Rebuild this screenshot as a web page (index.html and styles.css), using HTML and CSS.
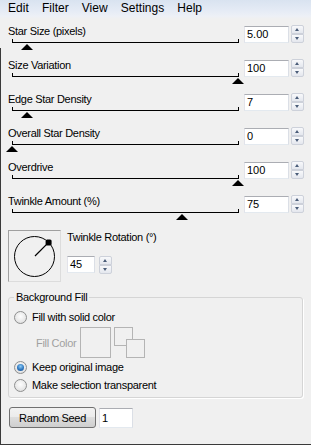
FILE: index.html
```html
<!DOCTYPE html>
<html>
<head>
<meta charset="utf-8">
<link rel="stylesheet" href="styles.css">
</head>
<body>
<div class="window">
  <nav class="menubar">
    <span class="menu-item">Edit</span>
    <span class="menu-item">Filter</span>
    <span class="menu-item">View</span>
    <span class="menu-item">Settings</span>
    <span class="menu-item">Help</span>
  </nav>
  <main class="panel">
    <div class="slider-row">
      <div class="slider-col">
        <div class="label">Star Size (pixels)</div>
        <div class="track"><span class="thumb" style="left:8px"></span></div>
      </div>
      <div class="value-box">5.00</div>
      <div class="spin"><span class="spin-btn up"></span><span class="spin-btn down"></span></div>
    </div>
    <div class="slider-row">
      <div class="slider-col">
        <div class="label">Size Variation</div>
        <div class="track"><span class="thumb" style="left:219px"></span></div>
      </div>
      <div class="value-box">100</div>
      <div class="spin"><span class="spin-btn up"></span><span class="spin-btn down"></span></div>
    </div>
    <div class="slider-row">
      <div class="slider-col">
        <div class="label">Edge Star Density</div>
        <div class="track"><span class="thumb" style="left:8px"></span></div>
      </div>
      <div class="value-box">7</div>
      <div class="spin"><span class="spin-btn up"></span><span class="spin-btn down"></span></div>
    </div>
    <div class="slider-row">
      <div class="slider-col">
        <div class="label">Overall Star Density</div>
        <div class="track"><span class="thumb" style="left:-7px"></span></div>
      </div>
      <div class="value-box">0</div>
      <div class="spin"><span class="spin-btn up"></span><span class="spin-btn down"></span></div>
    </div>
    <div class="slider-row">
      <div class="slider-col">
        <div class="label">Overdrive</div>
        <div class="track"><span class="thumb" style="left:219px"></span></div>
      </div>
      <div class="value-box">100</div>
      <div class="spin"><span class="spin-btn up"></span><span class="spin-btn down"></span></div>
    </div>
    <div class="slider-row">
      <div class="slider-col">
        <div class="label">Twinkle Amount (%)</div>
        <div class="track"><span class="thumb" style="left:163px"></span></div>
      </div>
      <div class="value-box">75</div>
      <div class="spin"><span class="spin-btn up"></span><span class="spin-btn down"></span></div>
    </div>

    <div class="dial-row">
      <div class="dial">
        <svg width="51" height="50" viewBox="0 0 51 50">
          <circle cx="25.5" cy="25.5" r="20" fill="none" stroke="#000" stroke-width="1"/>
          <line x1="26" y1="25" x2="39.6" y2="11.4" stroke="#000" stroke-width="1.2"/>
          <rect x="36.6" y="8.4" width="6" height="6" rx="1.5" fill="#000"/>
        </svg>
      </div>
      <div class="dial-side">
        <div class="label">Twinkle Rotation (°)</div>
        <div class="rot-input">
          <div class="value-box small">45</div>
          <div class="spin"><span class="spin-btn up"></span><span class="spin-btn down"></span></div>
        </div>
      </div>
    </div>

    <fieldset class="group">
      <legend>Background Fill</legend>
      <div class="radio-row"><span class="radio"></span><span>Fill with solid color</span></div>
      <div class="fill-row">
        <span class="fill-label">Fill Color</span>
        <span class="swatch"></span>
        <span class="swatch-pair"><span class="sq sq-a"></span><span class="sq sq-b"></span></span>
      </div>
      <div class="radio-row"><span class="radio checked"></span><span>Keep original image</span></div>
      <div class="radio-row"><span class="radio"></span><span>Make selection transparent</span></div>
    </fieldset>

    <div class="seed-row">
      <button class="btn" type="button">Random Seed</button>
      <div class="value-box seed-input">1</div>
    </div>
  </main>
</div>
</body>
</html>
```

FILE: styles.css
```css
* { box-sizing: border-box; }
html, body { margin: 0; padding: 0; }
body {
  background: #f0f0f0;
  font-family: "Liberation Sans", Arial, sans-serif;
  font-size: 11px;
  color: #000;
}
.window {
  position: relative;
  width: 311px;
  height: 445px;
  border-bottom: 1px solid #3a3a3a;
  overflow: hidden;
}
.window::before {
  content: "";
  position: absolute;
  left: 0;
  top: 48px;
  bottom: 0;
  width: 1px;
  background: #3a3a3a;
}
.menubar {
  display: flex;
  height: 19px;
  padding-left: 1.5px;
  background: linear-gradient(#d9e3f0 0%, #e5ebf5 55%, #edf0f6 85%, #f0f0f0 100%);
  font-size: 12px;
  line-height: 17px;
}
.menu-item { padding: 0 6.6px; }
.panel { padding: 6px 0 0 8px; }

.slider-row { display: flex; height: 34px; }
.slider-col { width: 236px; }
.label { line-height: 13px; letter-spacing: -0.3px; white-space: nowrap; }
.track {
  position: relative;
  margin: 1px 0 0 4px;
  width: 227px;
  height: 4px;
  border: 1px solid #000;
  border-top: 0;
}
.thumb {
  position: absolute;
  top: calc(100% + 2px);
  width: 0;
  height: 0;
  border-left: 6px solid transparent;
  border-right: 6px solid transparent;
  border-bottom: 6px solid #000;
}
.value-box {
  margin-top: 1px;
  width: 45px;
  height: 17px;
  background: #fff;
  border: 1px solid;
  border-color: #abadb3 #dbdfe6 #e3e9ef #e2e3ea;
  padding-left: 2px;
  line-height: 15px;
}
.spin {
  margin-left: 2px;
  width: 13px;
  height: 18px;
  display: flex;
  flex-direction: column;
  gap: 0;
}
.spin-btn {
  position: relative;
  height: 9px;
  border: 1px solid #cdd1da;
  background: linear-gradient(#f8f9fb, #e4e7ee);
}
.spin-btn.up { border-radius: 2px 2px 0 0; }
.spin-btn.down { border-radius: 0 0 2px 2px; }
.spin-btn::after {
  content: "";
  position: absolute;
  left: 3px;
  top: 2px;
  width: 0;
  height: 0;
  border-left: 2.5px solid transparent;
  border-right: 2.5px solid transparent;
}
.spin-btn.up::after { border-bottom: 3px solid #4b5d79; }
.spin-btn.down::after { border-top: 3px solid #4b5d79; }

.dial-row { display: flex; margin-top: 1px; }
.dial {
  width: 53px;
  height: 52px;
  border: 1px solid;
  border-color: #a0a0a0 #dcdcdc #dcdcdc #a0a0a0;
}
.dial svg { display: block; }
.dial-side { margin-left: 6px; padding-top: 1px; }
.rot-input { display: flex; margin-top: 12px; }
.value-box.small { width: 28px; margin-top: 0; }
.rot-input .spin { margin-left: 4px; }

.group {
  margin: 9px 0 0 0;
  width: 295px;
  min-width: 0;
  padding: 4px 0 3px 5px;
  border: 1px solid #d5d5d5;
  border-radius: 3px;
  box-shadow: 1px 1px 0 #fff;
}
.group legend {
  padding: 0 2px;
  line-height: 13px;
  letter-spacing: -0.3px;
}
.radio-row {
  display: flex;
  align-items: center;
  height: 18px;
  gap: 5px;
  letter-spacing: -0.3px;
}
.radio {
  position: relative;
  flex: none;
  width: 13px;
  height: 13px;
  border-radius: 50%;
  border: 1px solid #8e8f8f;
  background: radial-gradient(circle at 50% 40%, #fdfdfd 0%, #e8e8e8 60%, #d2d2d2 100%);
}
.radio.checked::after {
  content: "";
  position: absolute;
  left: 2px;
  top: 2px;
  width: 7px;
  height: 7px;
  border-radius: 50%;
  background: radial-gradient(circle at 50% 35%, #8ecbf5 0%, #2f78c0 55%, #1c4f8c 100%);
}
.fill-row {
  display: flex;
  align-items: center;
  height: 31px;
  margin-top: 1px;
  padding-left: 22px;
}
.fill-label { color: #a0a0a0; letter-spacing: -0.3px; width: 44px; }
.swatch { width: 31px; height: 31px; border: 1px solid #b4b4b4; }
.swatch-pair { position: relative; width: 31px; height: 31px; margin-left: 3px; }
.sq {
  position: absolute;
  width: 19px;
  height: 19px;
  border: 1px solid #b4b4b4;
  background: #f0f0f0;
}
.sq-a { left: 0; top: 0; }
.sq-b { left: 12px; top: 12px; }

.seed-row { display: flex; margin-top: 9px; padding-left: 1px; }
.btn {
  width: 87px;
  height: 21px;
  padding: 0;
  border: 1px solid #707070;
  border-radius: 3px;
  background: linear-gradient(#f2f2f2 0%, #ebebeb 50%, #dddddd 50%, #cfcfcf 100%);
  font: inherit;
  color: #000;
  letter-spacing: -0.3px;
}
.seed-input { margin-left: 3px; width: 34px; height: 20px; line-height: 18px; }
```
